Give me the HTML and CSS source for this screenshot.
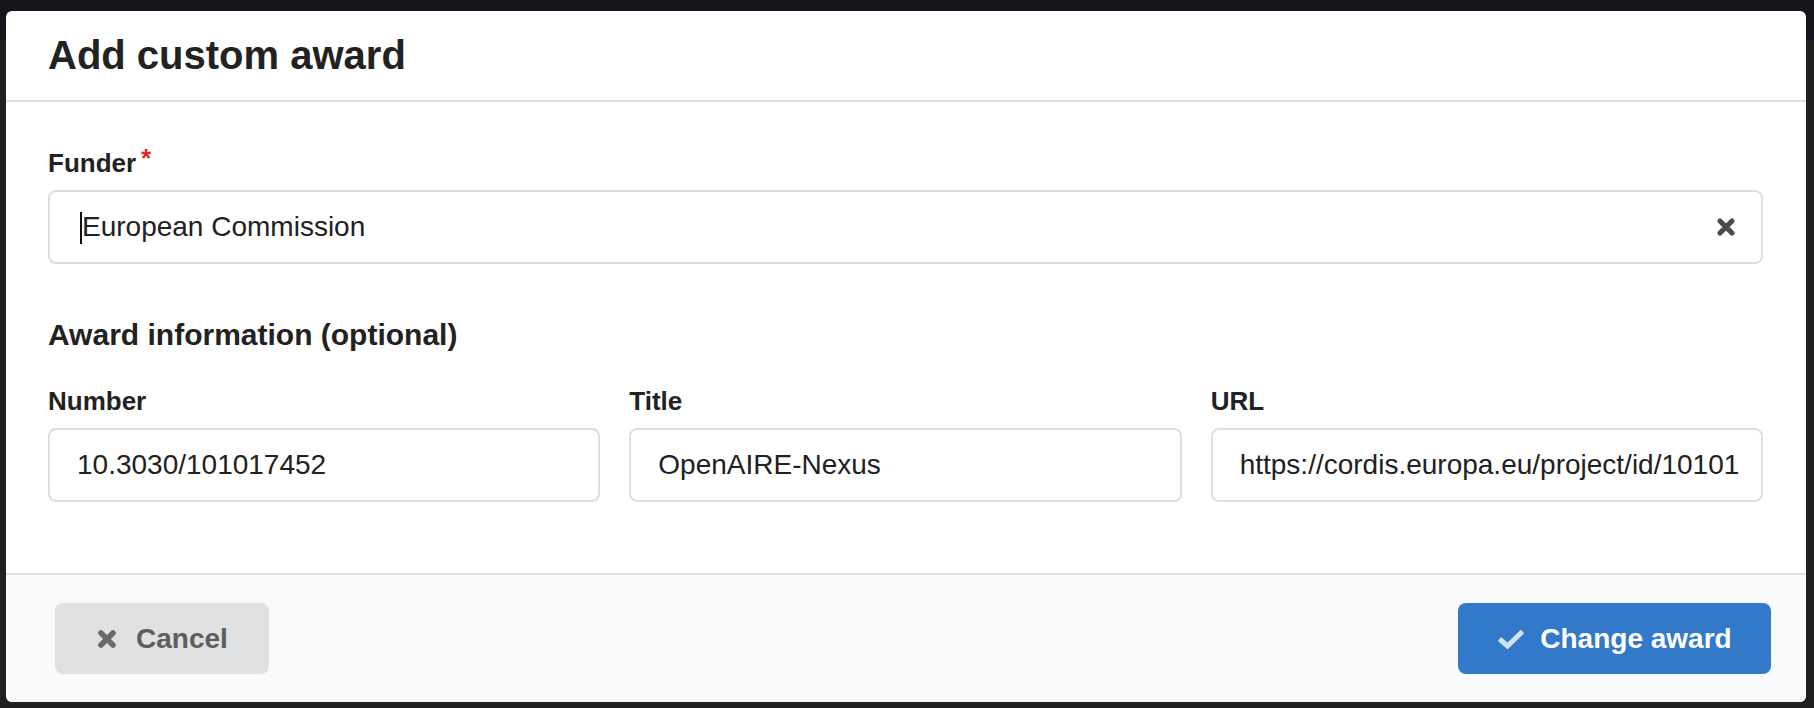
FILE: index.html
```html
<!DOCTYPE html>
<html lang="en">
<head>
<meta charset="utf-8">
<title>Add custom award</title>
<link rel="stylesheet" href="styles.css">
</head>
<body>
<div class="modal">
  <div class="modal-header">
    <h1 class="title">Add custom award</h1>
  </div>
  <div class="modal-content">
    <div class="field">
      <label class="label">Funder<span class="req">*</span></label>
      <div class="input funder">
        <span class="caret"></span>
        <span class="value">European Commission</span>
        <svg class="clear" viewBox="0 0 20 20" width="20" height="20" aria-hidden="true">
          <path d="M4 4 L16 16 M16 4 L4 16" stroke="#4b4b4b" stroke-width="5.2" stroke-linecap="round" fill="none"/>
        </svg>
      </div>
    </div>
    <h2 class="section">Award information (optional)</h2>
    <div class="fields">
      <div class="field">
        <label class="label">Number</label>
        <div class="input"><span class="value">10.3030/101017452</span></div>
      </div>
      <div class="field">
        <label class="label">Title</label>
        <div class="input"><span class="value">OpenAIRE-Nexus</span></div>
      </div>
      <div class="field">
        <label class="label">URL</label>
        <div class="input"><span class="value">https://cordis.europa.eu/project/id/10101</span></div>
      </div>
    </div>
  </div>
  <div class="modal-actions">
    <button class="btn cancel" type="button">
      <svg class="icon" viewBox="0 0 22 20" width="22" height="20" aria-hidden="true">
        <path d="M5 4 L17 16 M17 4 L5 16" stroke="currentColor" stroke-width="5.6" stroke-linecap="round" fill="none"/>
      </svg>
      <span>Cancel</span>
    </button>
    <button class="btn primary" type="button">
      <svg class="icon" viewBox="0 0 28 20" width="28" height="20" aria-hidden="true">
        <path d="M2.5 10 L10.5 17 L25.5 2.5" stroke="#d3e2f4" stroke-width="5" fill="none"/>
      </svg>
      <span>Change award</span>
    </button>
  </div>
</div>
</body>
</html>
```

FILE: styles.css
```css
html, body {
  margin: 0;
  padding: 0;
}

body {
  width: 1814px;
  height: 708px;
  overflow: hidden;
  background: linear-gradient(#15151b 0, #15151b 40px, #202020 40px);
  font-family: "Liberation Sans", Arial, Helvetica, sans-serif;
  color: #212121;
}

.modal {
  margin: 11px 0 0 6px;
  width: 1800px;
  height: 691px;
  background: #ffffff;
  border-radius: 6px;
  overflow: hidden;
  display: flex;
  flex-direction: column;
}

.modal-header {
  padding: 19px 43px 19px 42px;
  border-bottom: 2px solid #dededd;
}

.title {
  margin: 0;
  font-size: 40px;
  line-height: 51px;
  font-weight: 700;
  color: #222222;
}

.modal-content {
  padding: 46px 43px 71px 42px;
}

.field {
  min-width: 0;
}

.label {
  display: flex;
  align-items: flex-start;
  margin-bottom: 12px;
  font-size: 26px;
  line-height: 30px;
  font-weight: 700;
  color: #222222;
}

.req {
  margin-left: 5px;
  color: #db2828;
  font-size: 26px;
  line-height: 20px;
}

.input {
  box-sizing: border-box;
  height: 74px;
  border: 2px solid #dededd;
  border-radius: 8px;
  padding: 0 18px 0 27px;
  display: flex;
  align-items: center;
  font-size: 28px;
  line-height: 34px;
  color: #212121;
  background: #ffffff;
}

.value {
  flex: 1;
  min-width: 0;
  white-space: nowrap;
  overflow: hidden;
}

.funder {
  padding: 0 25px 0 30px;
}

.caret {
  flex: none;
  width: 2px;
  height: 32px;
  background: #111111;
  margin-top: 2px;
}

.clear {
  flex: none;
  margin-left: auto;
}

.section {
  margin: 54px 0 34px;
  font-size: 30px;
  line-height: 34px;
  font-weight: 700;
  color: #222222;
}

.fields {
  display: grid;
  grid-template-columns: repeat(3, minmax(0, 1fr));
  column-gap: 29px;
}

.modal-actions {
  flex: 1;
  border-top: 2px solid #dededd;
  background: #f9fafb;
  padding: 28px 35px 28px 49px;
  display: flex;
  justify-content: space-between;
  align-items: flex-start;
}

.btn {
  height: 71px;
  border: none;
  border-radius: 8px;
  display: flex;
  align-items: center;
  justify-content: center;
  font-family: "Liberation Sans", Arial, Helvetica, sans-serif;
  font-size: 28px;
  font-weight: 700;
  padding: 0;
  cursor: pointer;
}

.cancel {
  width: 214px;
  background: #e0e1e2;
  color: #5e5e5e;
  gap: 18px;
}

.cancel .icon {
  color: #6a6a6a;
}

.primary {
  width: 313px;
  background: #3279c9;
  color: #ffffff;
  gap: 15px;
}

.icon {
  flex: none;
  display: block;
}
```
